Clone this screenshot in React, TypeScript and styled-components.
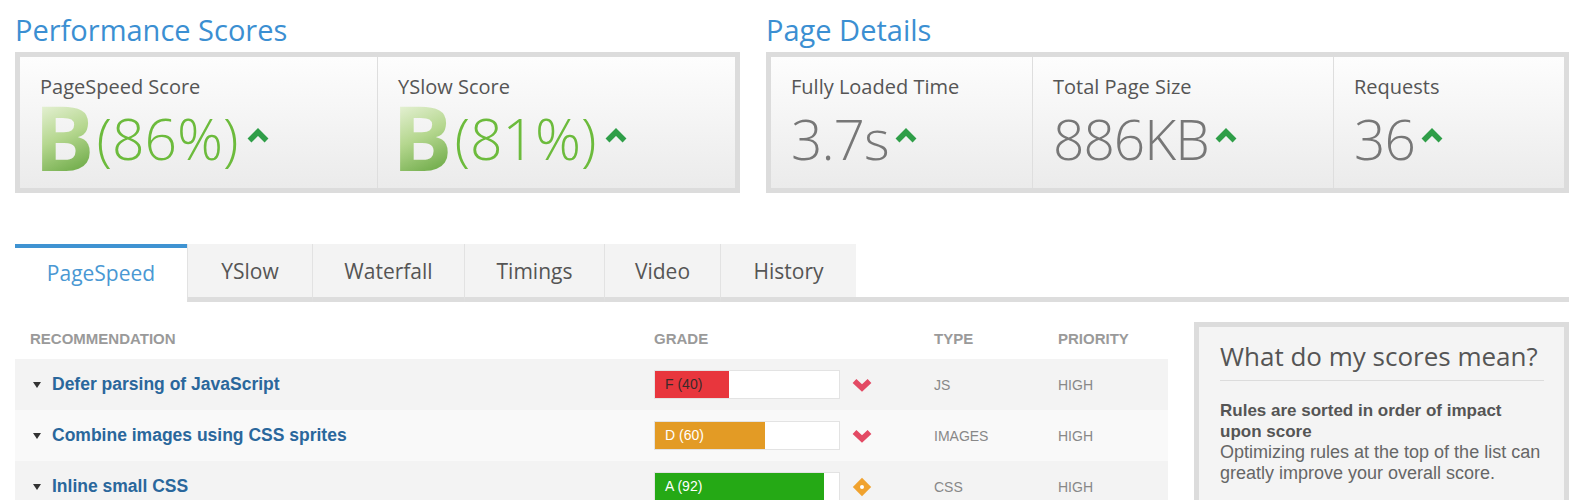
import styled, { createGlobalStyle } from "styled-components";

const GlobalStyle = createGlobalStyle`
  body {
    margin: 0;
    background: #fff;
    font-family: "Open Sans", "Noto Sans", sans-serif;
  }
`;

const Page = styled.div`
  width: 1554px;
  padding: 12px 10px 0 15px;
`;

const TopRow = styled.div`
  display: flex;
  gap: 26px;
`;

const Section = styled.section<{ $w: number }>`
  width: ${(p) => p.$w}px;
`;

const SectionTitle = styled.h2`
  margin: 0 0 4px;
  font-size: 29px;
  line-height: 36px;
  font-weight: 400;
  color: #3b8fd2;
`;

const Panel = styled.div`
  display: flex;
  height: 131px;
  border: 5px solid #dcdcdc;
  background: linear-gradient(#fdfdfd, #ebebeb);
`;

const Cell = styled.div<{ $w: number }>`
  width: ${(p) => p.$w}px;
  padding: 18px 0 0 20px;
  box-sizing: border-box;
  & + & {
    border-left: 1px solid #dedede;
  }
`;

const Label = styled.div`
  font-size: 20px;
  line-height: 24px;
  color: #555;
`;

const ValueRow = styled.div`
  display: flex;
  align-items: center;
  height: 78px;
`;

const Grade = styled.span`
  position: relative;
  top: -2px;
  font-size: 90px;
  line-height: 78px;
  font-weight: 700;
  margin-left: -6px;
  margin-right: 2px;
  background: linear-gradient(155deg, #e6f1d5 10%, #b5d78f 50%, #68a742 95%);
  -webkit-background-clip: text;
  background-clip: text;
  color: transparent;
`;

const Percent = styled.span`
  font-size: 57px;
  line-height: 1;
  font-weight: 300;
  color: #6cbb3c;
`;

const Metric = styled.span`
  font-size: 55px;
  line-height: 1;
  font-weight: 300;
  color: #777;
  letter-spacing: -1px;
`;

const Up = styled.svg<{ $gap: number }>`
  width: 22px;
  height: 15px;
  margin-left: ${(p) => p.$gap}px;
  margin-top: -5px;
`;

const TabBar = styled.div`
  display: flex;
  margin-top: 51px;
`;

const Tab = styled.div<{ $w: number; $active?: boolean }>`
  width: ${(p) => p.$w}px;
  height: 58px;
  box-sizing: border-box;
  display: flex;
  align-items: center;
  justify-content: center;
  font-size: 21px;
  color: ${(p) => (p.$active ? "#4a98d3" : "#555")};
  background: ${(p) => (p.$active ? "#fff" : "#f3f3f3")};
  border-top: ${(p) => (p.$active ? "4px solid #3f93d2" : "0")};
  border-bottom: ${(p) => (p.$active ? "0" : "5px solid #dddddd")};
  padding-bottom: ${(p) => (p.$active ? "5px" : "0")};
  & + & {
    border-left: 1px solid #e2e2e2;
  }
`;

const TabFill = styled.div`
  flex: 1;
  height: 58px;
  box-sizing: border-box;
  border-bottom: 5px solid #dddddd;
`;

const Content = styled.div`
  display: flex;
  gap: 26px;
  align-items: flex-start;
`;

const Table = styled.div`
  width: 1153px;
  margin-top: 16px;
  font-family: "Liberation Sans", Arial, sans-serif;
`;

const Grid = styled.div<{ $bg?: string }>`
  display: grid;
  grid-template-columns: 639px 186px 94px 124px 1fr;
  align-items: center;
  background: ${(p) => p.$bg || "transparent"};
`;

const Head = styled(Grid)`
  height: 41px;
  font-size: 15px;
  font-weight: 700;
  color: #9a9a9a;
  & > span:first-child {
    padding-left: 15px;
  }
`;

const Row = styled(Grid)`
  height: 51px;
  font-size: 14px;
  color: #888;
`;

const RuleName = styled.div`
  display: flex;
  align-items: center;
  padding-left: 18px;
  font-size: 17.5px;
  font-weight: 700;
  color: #2a679c;
`;

const Caret = styled.span`
  width: 0;
  height: 0;
  border-left: 4.5px solid transparent;
  border-right: 4.5px solid transparent;
  border-top: 6px solid #333;
  margin-right: 11px;
`;

const Bar = styled.div`
  height: 29px;
  box-sizing: border-box;
  border: 1px solid #e3e3e3;
  background: #fff;
`;

const Fill = styled.div<{ $color: string; $text: string }>`
  height: 100%;
  background: ${(p) => p.$color};
  color: ${(p) => p.$text};
  font-size: 14px;
  line-height: 27px;
  padding-left: 10px;
  box-sizing: border-box;
  white-space: nowrap;
`;

const IconCell = styled.div`
  display: flex;
  align-items: center;
  padding-left: 12px;
`;

const Side = styled.aside`
  width: 375px;
  box-sizing: border-box;
  margin-top: 20px;
  border: 5px solid #dcdcdc;
  background: #f4f4f4;
  padding: 13px 20px 20px 21px;
`;

const SideTitle = styled.h3`
  margin: 0;
  font-size: 26px;
  line-height: 32px;
  font-weight: 400;
  color: #555;
  padding-bottom: 8px;
  border-bottom: 1px solid #dcdcdc;
`;

const SideText = styled.p`
  margin: 19px 0 0;
  font-family: "Liberation Sans", Arial, sans-serif;
  font-size: 18px;
  line-height: 21px;
  color: #666;
  & b {
    font-size: 17px;
    color: #555;
    display: block;
  }
`;

const UpArrow = ({ gap }: { gap: number }) => (
  <Up $gap={gap} viewBox="0 0 22 15">
    <polyline points="2.5,12.5 11,4 19.5,12.5" fill="none" stroke="#2f9e48" strokeWidth="5.5" />
  </Up>
);

const DownIcon = () => (
  <svg width="20" height="14" viewBox="0 0 20 14">
    <polyline points="2.5,3 10,10 17.5,3" fill="none" stroke="#e34a64" strokeWidth="5.5" />
  </svg>
);

const DiamondIcon = () => (
  <svg width="20" height="20" viewBox="0 0 20 20">
    <rect x="3.5" y="3.5" width="13" height="13" fill="#f0a22e" transform="rotate(45 10 10)" />
    <circle cx="10" cy="10" r="2" fill="#fff" />
  </svg>
);

const rules = [
  { name: "Defer parsing of JavaScript", grade: "F (40)", score: 40, color: "#e8363d", text: "#3a2a2a", icon: "down", type: "JS", bg: "#f3f3f3" },
  { name: "Combine images using CSS sprites", grade: "D (60)", score: 60, color: "#e39b25", text: "#fff", icon: "down", type: "IMAGES", bg: "#f9f9f9" },
  { name: "Inline small CSS", grade: "A (92)", score: 92, color: "#25a915", text: "#fff", icon: "diamond", type: "CSS", bg: "#f3f3f3" },
];

const tabs = [
  { label: "PageSpeed", w: 172 },
  { label: "YSlow", w: 125 },
  { label: "Waterfall", w: 152 },
  { label: "Timings", w: 140 },
  { label: "Video", w: 116 },
  { label: "History", w: 136 },
];

export default function App() {
  return (
    <Page>
      <GlobalStyle />
      <TopRow>
        <Section $w={725}>
          <SectionTitle>Performance Scores</SectionTitle>
          <Panel>
            <Cell $w={357}>
              <Label>PageSpeed Score</Label>
              <ValueRow>
                <Grade>B</Grade>
                <Percent>(86%)</Percent>
                <UpArrow gap={8} />
              </ValueRow>
            </Cell>
            <Cell $w={358}>
              <Label>YSlow Score</Label>
              <ValueRow>
                <Grade>B</Grade>
                <Percent>(81%)</Percent>
                <UpArrow gap={8} />
              </ValueRow>
            </Cell>
          </Panel>
        </Section>
        <Section $w={803}>
          <SectionTitle>Page Details</SectionTitle>
          <Panel>
            <Cell $w={261}>
              <Label>Fully Loaded Time</Label>
              <ValueRow>
                <Metric>3.7s</Metric>
                <UpArrow gap={6} />
              </ValueRow>
            </Cell>
            <Cell $w={301}>
              <Label>Total Page Size</Label>
              <ValueRow>
                <Metric>886KB</Metric>
                <UpArrow gap={6} />
              </ValueRow>
            </Cell>
            <Cell $w={231}>
              <Label>Requests</Label>
              <ValueRow>
                <Metric>36</Metric>
                <UpArrow gap={6} />
              </ValueRow>
            </Cell>
          </Panel>
        </Section>
      </TopRow>

      <TabBar>
        {tabs.map((t, i) => (
          <Tab key={t.label} $w={t.w} $active={i === 0}>
            {t.label}
          </Tab>
        ))}
        <TabFill />
      </TabBar>

      <Content>
        <Table>
          <Head>
            <span>RECOMMENDATION</span>
            <span>GRADE</span>
            <span />
            <span>TYPE</span>
            <span>PRIORITY</span>
          </Head>
          {rules.map((r) => (
            <Row key={r.name} $bg={r.bg}>
              <RuleName>
                <Caret />
                {r.name}
              </RuleName>
              <Bar>
                <Fill $color={r.color} $text={r.text} style={{ width: `${r.score}%` }}>
                  {r.grade}
                </Fill>
              </Bar>
              <IconCell>{r.icon === "down" ? <DownIcon /> : <DiamondIcon />}</IconCell>
              <span>{r.type}</span>
              <span>HIGH</span>
            </Row>
          ))}
        </Table>
        <Side>
          <SideTitle>What do my scores mean?</SideTitle>
          <SideText>
            <b>Rules are sorted in order of impact upon score</b>
            Optimizing rules at the top of the list can greatly improve your overall score.
          </SideText>
        </Side>
      </Content>
    </Page>
  );
}
